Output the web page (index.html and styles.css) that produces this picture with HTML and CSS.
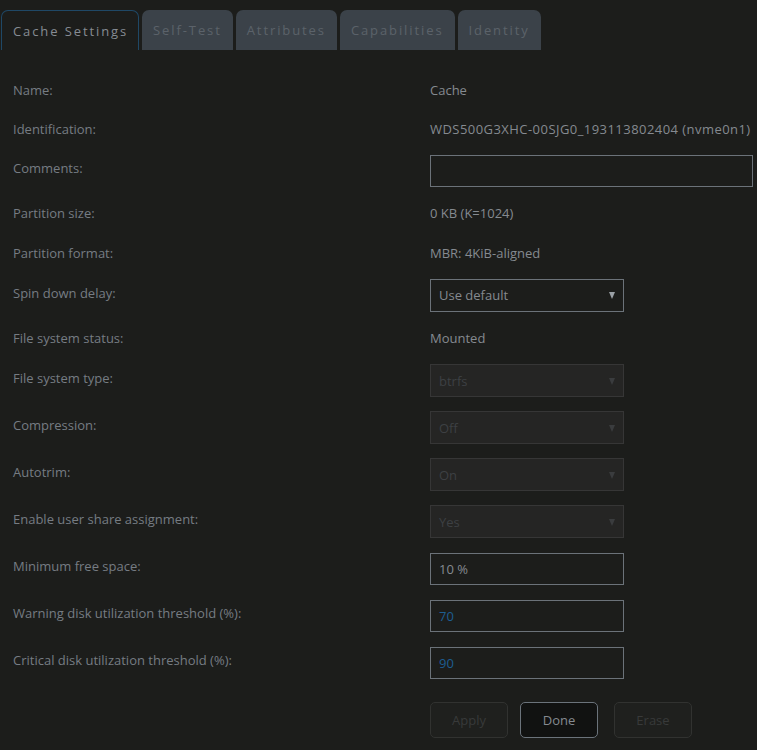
FILE: index.html
```html
<!DOCTYPE html>
<html>
<head>
<meta charset="utf-8">
<link rel="stylesheet" href="styles.css">
</head>
<body>
<div class="tabs">
  <div class="tab active">Cache Settings</div>
  <div class="tab">Self-Test</div>
  <div class="tab">Attributes</div>
  <div class="tab">Capabilities</div>
  <div class="tab">Identity</div>
</div>
<div class="form">
  <div class="row text short"><div class="label">Name:</div><div class="value">Cache</div></div>
  <div class="row text short"><div class="label">Identification:</div><div class="value id">WDS500G3XHC-00SJG0_193113802404 (nvme0n1)</div></div>
  <div class="row ctl comments"><div class="label">Comments:</div><div class="input wide"></div></div>
  <div class="row text"><div class="label">Partition size:</div><div class="value">0 KB (K=1024)</div></div>
  <div class="row text short"><div class="label">Partition format:</div><div class="value">MBR: 4KiB-aligned</div></div>
  <div class="row ctl spin"><div class="label">Spin down delay:</div><div class="select"><span>Use default</span><i class="arrow"></i></div></div>
  <div class="row text short"><div class="label">File system status:</div><div class="value">Mounted</div></div>
  <div class="row ctl"><div class="label">File system type:</div><div class="select disabled"><span>btrfs</span><i class="arrow"></i></div></div>
  <div class="row ctl"><div class="label">Compression:</div><div class="select disabled"><span>Off</span><i class="arrow"></i></div></div>
  <div class="row ctl"><div class="label">Autotrim:</div><div class="select disabled"><span>On</span><i class="arrow"></i></div></div>
  <div class="row ctl"><div class="label">Enable user share assignment:</div><div class="select disabled"><span>Yes</span><i class="arrow"></i></div></div>
  <div class="row ctl"><div class="label">Minimum free space:</div><div class="input"><span>10 %</span></div></div>
  <div class="row ctl"><div class="label">Warning disk utilization threshold (%):</div><div class="input blue"><span>70</span></div></div>
  <div class="row ctl"><div class="label">Critical disk utilization threshold (%):</div><div class="input blue"><span>90</span></div></div>
  <div class="buttons">
    <div class="btn disabled">Apply</div>
    <div class="btn done">Done</div>
    <div class="btn disabled">Erase</div>
  </div>
</div>
</body>
</html>
```
FILE: styles.css
```css
html, body {
  margin: 0;
  padding: 0;
  background: #1c1d1b;
  height: 100%;
}
body {
  font-family: "Open Sans", "Noto Sans", sans-serif;
  font-size: 13px;
  color: #767c83;
  overflow: hidden;
}
.tabs {
  display: flex;
  gap: 3px;
  padding: 10px 0 0 1px;
  height: 40px;
}
.tab {
  box-sizing: border-box;
  height: 40px;
  padding: 0 11px;
  display: flex;
  align-items: center;
  background: #3b4249;
  color: #5b626a;
  letter-spacing: 1.9px;
  border-radius: 7px 7px 0 0;
  font-size: 13px;
}
.tab.active {
  background: transparent;
  border: 1px solid #1f4866;
  border-bottom: none;
  color: #868c93;
  padding: 0 10px 0 11px;
}
.form {
  padding: 20px 0 0 13px;
}
.row {
  display: grid;
  grid-template-columns: 417px 1fr;
  align-items: center;
}
.row.text { height: 40px; }
.row.text.short { height: 39px; }
.row.ctl { height: 47px; }
.row.comments { height: 45px; }
.row.spin { height: 46px; }
.row.ctl .label { padding-bottom: 5px; }
.value { color: #858a90; }
.value.id { letter-spacing: 0.45px; }
.select, .input {
  box-sizing: border-box;
  width: 194px;
  height: 33px;
  border: 1px solid #6b7279;
  display: flex;
  align-items: center;
  padding: 0 8px;
  color: #858a90;
}
.input { height: 32px; }
.input.wide { width: 323px; }
.select span { flex: 1; }
.arrow {
  width: 0;
  height: 0;
  border-left: 3.5px solid transparent;
  border-right: 3.5px solid transparent;
  border-top: 7px solid #9aa0a6;
  margin-top: 1px;
}
.select.disabled {
  background: #252524;
  border-color: #363636;
  color: #3d4043;
}
.select.disabled .arrow { border-top-color: #3a3c3e; }
.input.blue { color: #1d5e92; }
.buttons {
  display: flex;
  gap: 12px;
  padding: 16px 0 0 417px;
}
.btn {
  box-sizing: border-box;
  width: 78px;
  height: 36px;
  border-radius: 5px;
  display: flex;
  align-items: center;
  justify-content: center;
  border: 1px solid #313230;
  background: #1f201e;
  color: #383a3a;
}
.btn.done {
  background: #111211;
  border-color: #6b737b;
  color: #858a90;
}
.btn.done + .btn { margin-left: 4px; }
```
